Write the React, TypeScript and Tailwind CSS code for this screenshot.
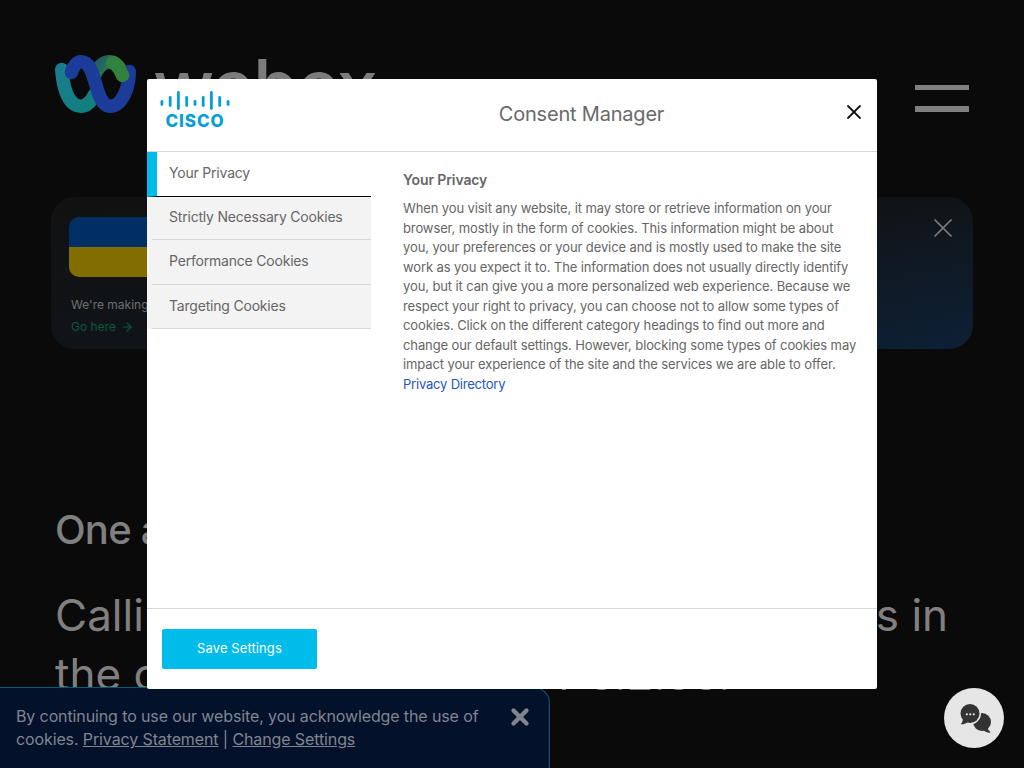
import { X, ArrowRight } from 'lucide-react';

const categories = [
  { label: 'Strictly Necessary Cookies', height: 'h-[43px]' },
  { label: 'Performance Cookies', height: 'h-[45px]' },
  { label: 'Targeting Cookies', height: 'h-[44px]' },
];

function WebexLogo() {
  return (
    <svg width="81" height="60" viewBox="0 0 84 62" fill="none" className="shrink-0">
      <defs>
        <linearGradient id="wbxTeal" x1="0" y1="0" x2="1" y2="1">
          <stop offset="0" stopColor="#1a7d8e" />
          <stop offset="1" stopColor="#0f7f7c" />
        </linearGradient>
        <linearGradient id="wbxGreen" x1="0" y1="0" x2="1" y2="0.4">
          <stop offset="0" stopColor="#1d5a6e" />
          <stop offset="1" stopColor="#37853a" />
        </linearGradient>
      </defs>
      <path d="M7 16C8 30 12 54 27 54C34 54 38 48 41 42" stroke="url(#wbxTeal)" strokeWidth="14" strokeLinecap="round" />
      <path d="M40 24C44 14 50 8 57 8C63 8 68 14 70 22" stroke="url(#wbxGreen)" strokeWidth="14" strokeLinecap="round" />
      <path d="M17 19C19 12 23 8 27 8C38 8 40 26 45 40C48 49 52 54 57 54C70 54 77 34 77 18" stroke="#1b3c98" strokeWidth="14" strokeLinecap="round" />
      <path d="M60 9C65 12 68 17 70 22" stroke="#32813e" strokeWidth="14" strokeLinecap="round" />
    </svg>
  );
}

function CiscoLogo() {
  return (
    <div className="flex w-[70px] flex-col items-center">
      <svg width="70" height="19" viewBox="0 0 70 19" fill="#049fd9">
        <rect x="0.500" y="9" width="2.800" height="6" rx="1.400" />
        <rect x="8.800" y="5" width="2.800" height="11" rx="1.400" />
        <rect x="17" y="0" width="2.800" height="19" rx="1.400" />
        <rect x="25.300" y="5" width="2.800" height="11" rx="1.400" />
        <rect x="33.600" y="9" width="2.800" height="6" rx="1.400" />
        <rect x="41.800" y="5" width="2.800" height="11" rx="1.400" />
        <rect x="50" y="0" width="2.800" height="19" rx="1.400" />
        <rect x="58.300" y="5" width="2.800" height="11" rx="1.400" />
        <rect x="66.700" y="9" width="2.800" height="6" rx="1.400" />
      </svg>
      <span className="mt-[2px] text-[17px] leading-[18px] font-extrabold tracking-[0.9px] text-[#049fd9]">CISCO</span>
    </div>
  );
}

function ChatIcon() {
  return (
    <svg width="34" height="30" viewBox="0 0 34 30" fill="#333333">
      <circle cx="25" cy="19" r="9" />
      <path d="M29 24L33.700 29.500C31 30 28.500 29 26 27z" />
      <circle cx="13" cy="10.500" r="11" fill="#e6e6e6" />
      <circle cx="13" cy="10.500" r="9.500" />
      <path d="M6 15C6 18 5 20 3.700 21.300C6 21.500 9 20.500 11 19z" />
      <circle cx="9.800" cy="11.300" r="1.100" fill="#e6e6e6" />
      <circle cx="13.300" cy="11.300" r="1.100" fill="#e6e6e6" />
      <circle cx="16.800" cy="11.300" r="1.100" fill="#e6e6e6" />
    </svg>
  );
}

export default function App() {
  return (
    <div className="relative h-[768px] w-[1024px] overflow-hidden bg-[#0a0a0a] font-['Inter',sans-serif]">
      {/* page behind the overlay */}
      <div className="flex h-full flex-col px-[55px] text-[#808080]">
        <header className="flex items-start pt-[54px]">
          <WebexLogo />
          <span className="-mt-[4px] ml-[17px] text-[74px] leading-[72px] font-medium tracking-tight text-[#7c7c7c]">webex</span>
          <div className="mt-[31px] ml-auto flex flex-col gap-[16px]">
            <div className="h-[5px] w-[54px] bg-[#808080]" />
            <div className="h-[6px] w-[54px] bg-[#808080]" />
          </div>
        </header>

        <section className="relative -mx-[4px] mt-[75px] h-[152px] rounded-[24px] bg-gradient-to-br from-[#111111] via-[#101418] to-[#0d2036] px-[18px] pt-[20px]">
          <div className="h-[60px] w-[160px] overflow-hidden rounded-[10px]">
            <div className="h-[30px] bg-[#002f66]" />
            <div className="h-[30px] bg-[#826d00]" />
          </div>
          <p className="mt-[20px] ml-[2px] text-[12px] leading-[16px] text-[#6f6f6f]">We're making</p>
          <p className="mt-[6px] ml-[2px] flex items-center gap-1 text-[12px] leading-[16px] text-[#0b5a3c]">
            Go here <ArrowRight size={14} />
          </p>
          <X size={32} strokeWidth={1.300} className="absolute top-[15px] right-[14px] text-[#7d7d7d]" />
        </section>

        <h2 className="mt-[155px] text-[40px] leading-[52px] font-medium tracking-[-0.8px]">One a</h2>
        <p className="mt-[30px] text-[44px] leading-[59px] whitespace-nowrap">
          Callin<span className="ml-[706px]">s in</span>
        </p>
        <p className="text-[44px] leading-[59px] whitespace-nowrap">
          the c<span className="ml-[400px]">r 3.2.33.</span>
        </p>
      </div>

      {/* cookie notice */}
      <div className="absolute bottom-0 left-0 flex h-[81px] w-[550px] items-start rounded-tr-[16px] border-t border-r border-[#0b5a75] bg-[#04112a] pt-[17px] pr-[16px] pl-[16px]">
        <p className="w-[480px] text-[16px] leading-[23px] tracking-[-0.117px] text-[#808590]">
          By continuing to use our website, you acknowledge the use of cookies.{' '}
          <a className="underline">Privacy Statement</a> | <a className="underline">Change Settings</a>
        </p>
        <X size={26} strokeWidth={4} className="-mt-[1px] ml-auto text-[#808590]" />
      </div>

      {/* consent dialog */}
      <div className="absolute top-[79px] left-[147px] flex h-[610px] w-[730px] flex-col rounded-[2px] bg-white text-[#666666]">
        <div className="relative flex h-[73px] shrink-0 items-center justify-center border-b border-[#d8d8d8]">
          <div className="absolute top-[12px] left-[13px]">
            <CiscoLogo />
          </div>
          <h1 className="mb-[2px] ml-[139px] text-[20px] leading-[24px] tracking-[-0.2px] text-[#696969]">Consent Manager</h1>
          <X size={24} strokeWidth={1.800} className="absolute top-[21px] right-[11px] text-[#111111]" />
        </div>

        <div className="flex min-h-0 flex-1">
          <nav className="w-[224px] shrink-0 text-[14px] tracking-[-0.2px] text-[#666666]">
            <div className="flex h-[45px] items-center border-b border-black border-l-[10px] border-l-[#00bceb] pb-[3px] pl-[12px]">Your Privacy</div>
            {categories.map(({ label, height }) => (
              <div key={label} className={`${height} bg-[#f3f3f3] pl-[5px]`}>
                <div className="flex h-full items-center border-b border-[#d8d8d8] pb-[3px] pl-[17px]">{label}</div>
              </div>
            ))}
          </nav>
          <div className="flex-1 pt-[18px] pr-[20px] pl-[32px]">
            <h3 className="text-[14px] leading-[20px] font-semibold tracking-[-0.1px] text-[#666666]">Your Privacy</h3>
            <p className="mt-[9px] text-[13px] leading-[19.500px] tracking-[-0.11px] text-[#666666]">
              When you visit any website, it may store or retrieve information on your browser, mostly in the form of
              cookies. This information might be about you, your preferences or your device and is mostly used to make
              the site work as you expect it to. The information does not usually directly identify you, but it can
              give you a more personalized web experience. Because we respect your right to privacy, you can choose not
              to allow some types of cookies. Click on the different category headings to find out more and change our
              default settings. However, blocking some types of cookies may impact your experience of the site and the
              services we are able to offer.
              <br />
              <a className="tracking-[-0.2px] text-[#2455c3]">Privacy Directory</a>
            </p>
          </div>
        </div>

        <div className="flex h-[81px] shrink-0 items-start border-t border-[#d8d8d8] pt-[20px] pl-[15px]">
          <button className="h-[40px] w-[155px] rounded-[2px] bg-[#00bceb] text-[13px] tracking-[0.1px] text-white">Save Settings</button>
        </div>
      </div>

      {/* chat launcher */}
      <div className="absolute right-[20px] bottom-[20px] flex h-[60px] w-[60px] items-center justify-center rounded-full bg-[#e6e6e6]">
        <ChatIcon />
      </div>
    </div>
  );
}
